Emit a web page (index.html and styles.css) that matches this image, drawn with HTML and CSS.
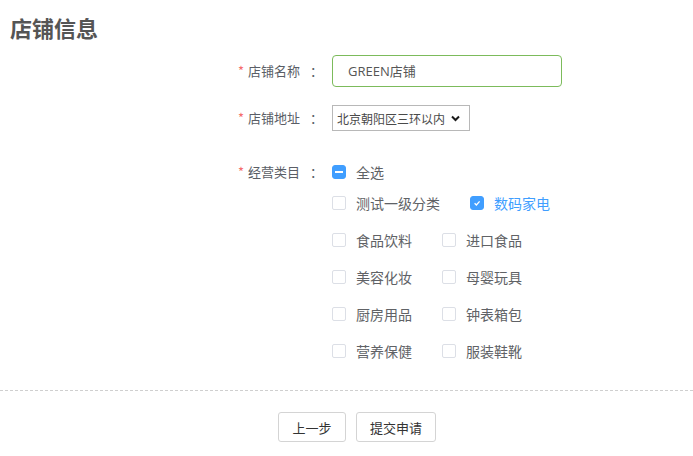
FILE: index.html
```html
<!DOCTYPE html>
<html lang="zh-CN">
<head>
<meta charset="utf-8">
<title>店铺信息</title>
<link rel="stylesheet" href="styles.css">
</head>
<body>
<div class="page">
  <h1 class="title">店铺信息</h1>
  <div class="form">
    <div class="form-item row-name">
      <label class="label"><span class="req">*</span>店铺名称<span class="colon">：</span></label>
      <div class="input">GREEN店铺</div>
    </div>
    <div class="form-item row-addr">
      <label class="label"><span class="req">*</span>店铺地址<span class="colon">：</span></label>
      <div class="select">
        <span class="select-text">北京朝阳区三环以内</span>
        <svg class="chev" width="9" height="7" viewBox="0 0 9 7"><path d="M1 1.5 L4.5 5 L8 1.5" fill="none" stroke="#1a1a1a" stroke-width="2"/></svg>
      </div>
    </div>
    <div class="form-item row-cat">
      <label class="label"><span class="req">*</span>经营类目<span class="colon">：</span></label>
      <div class="cats">
        <div class="check all">
          <span class="box box-ind"><span class="dash"></span></span>
          <span class="check-text">全选</span>
        </div>
        <div class="group">
          <div class="check"><span class="box"></span><span class="check-text">测试一级分类</span></div>
          <div class="check checked">
            <span class="box box-on"><svg width="10" height="10" viewBox="0 0 10 10"><path d="M2.6 5.2 L4.4 7 L7.6 3.4" fill="none" stroke="#fff" stroke-width="1.3"/></svg></span>
            <span class="check-text">数码家电</span>
          </div>
          <div class="check"><span class="box"></span><span class="check-text">食品饮料</span></div>
          <div class="check"><span class="box"></span><span class="check-text">进口食品</span></div>
          <div class="check"><span class="box"></span><span class="check-text">美容化妆</span></div>
          <div class="check"><span class="box"></span><span class="check-text">母婴玩具</span></div>
          <div class="check"><span class="box"></span><span class="check-text">厨房用品</span></div>
          <div class="check"><span class="box"></span><span class="check-text">钟表箱包</span></div>
          <div class="check"><span class="box"></span><span class="check-text">营养保健</span></div>
          <div class="check"><span class="box"></span><span class="check-text">服装鞋靴</span></div>
        </div>
      </div>
    </div>
  </div>
  <div class="divider"></div>
  <div class="actions">
    <button class="btn btn-prev">上一步</button>
    <button class="btn btn-submit">提交申请</button>
  </div>
</div>
</body>
</html>
```

FILE: styles.css
```css
* { box-sizing: border-box; }
html, body { margin: 0; padding: 0; background: #fff; }
body {
  font-family: "Open Sans", "Noto Sans CJK SC", sans-serif;
  color: #5a5e66;
}
.page { width: 693px; }
.title {
  margin: 0;
  padding: 12px 0 0 10px;
  font-family: "Noto Sans CJK SC", sans-serif;
  font-size: 22px;
  line-height: 30px;
  font-weight: 700;
  color: #555;
}
.form { padding-left: 10px; }
.form-item { display: flex; align-items: center; }
.row-name { margin-top: 13px; }
.row-addr { margin-top: 18px; }
.row-cat { margin-top: 31px; align-items: flex-start; }
.label {
  width: 322px;
  text-align: right;
  font-family: "Noto Sans CJK SC", sans-serif;
  font-size: 13px;
  line-height: 20px;
  color: #5a5e66;
  white-space: nowrap;
}
.req { color: #f56c6c; margin-right: 4px; }
.colon { display: inline-block; width: 13px; margin-left: 10px; margin-right: 9px; text-align: left; }
.input {
  width: 230px;
  height: 32px;
  border: 1px solid #7cbb5b;
  border-radius: 4px;
  padding-left: 15px;
  font-size: 13px;
  line-height: 30px;
  color: #555;
}
.select {
  width: 138px;
  height: 26px;
  border: 1px solid #b8b8b8;
  display: flex;
  align-items: center;
  padding-left: 4px;
  font-family: "Noto Sans CJK SC", sans-serif;
  font-size: 12px;
  color: #4a4a4a;
}
.select-text { margin-right: 6px; }
.chev { display: block; }
.cats { display: flex; flex-direction: column; }
.check {
  display: flex;
  align-items: center;
  height: 20px;
  font-family: "Noto Sans CJK SC", sans-serif;
  font-size: 14px;
  color: #606266;
}
.box {
  width: 14px;
  height: 14px;
  border: 1px solid #dcdfe6;
  border-radius: 2px;
  background: #fff;
  display: flex;
  align-items: center;
  justify-content: center;
  flex: none;
}
.box-ind, .box-on { background: #409eff; border-color: #409eff; border-radius: 3px; }
.dash { width: 8px; height: 2px; background: #fff; }
.check-text { margin-left: 10px; line-height: 20px; }
.checked .check-text { color: #409eff; }
.group {
  margin-top: 11px;
  width: 260px;
  display: flex;
  flex-wrap: wrap;
  row-gap: 17px;
}
.group .check { margin-right: 30px; }
.divider {
  margin-top: 29px;
  border-top: 1px dashed #cfcfcf;
}
.actions {
  margin-top: 21px;
  display: flex;
  justify-content: center;
  gap: 10px;
  padding-left: 21px;
}
.btn {
  height: 30px;
  padding: 0;
  border: 1px solid #d4d4d4;
  border-radius: 3px;
  background: #fff;
  font-family: "Noto Sans CJK SC", sans-serif;
  font-size: 13px;
  color: #333;
  cursor: pointer;
}
.btn-prev { width: 68px; }
.btn-submit { width: 80px; }
```
